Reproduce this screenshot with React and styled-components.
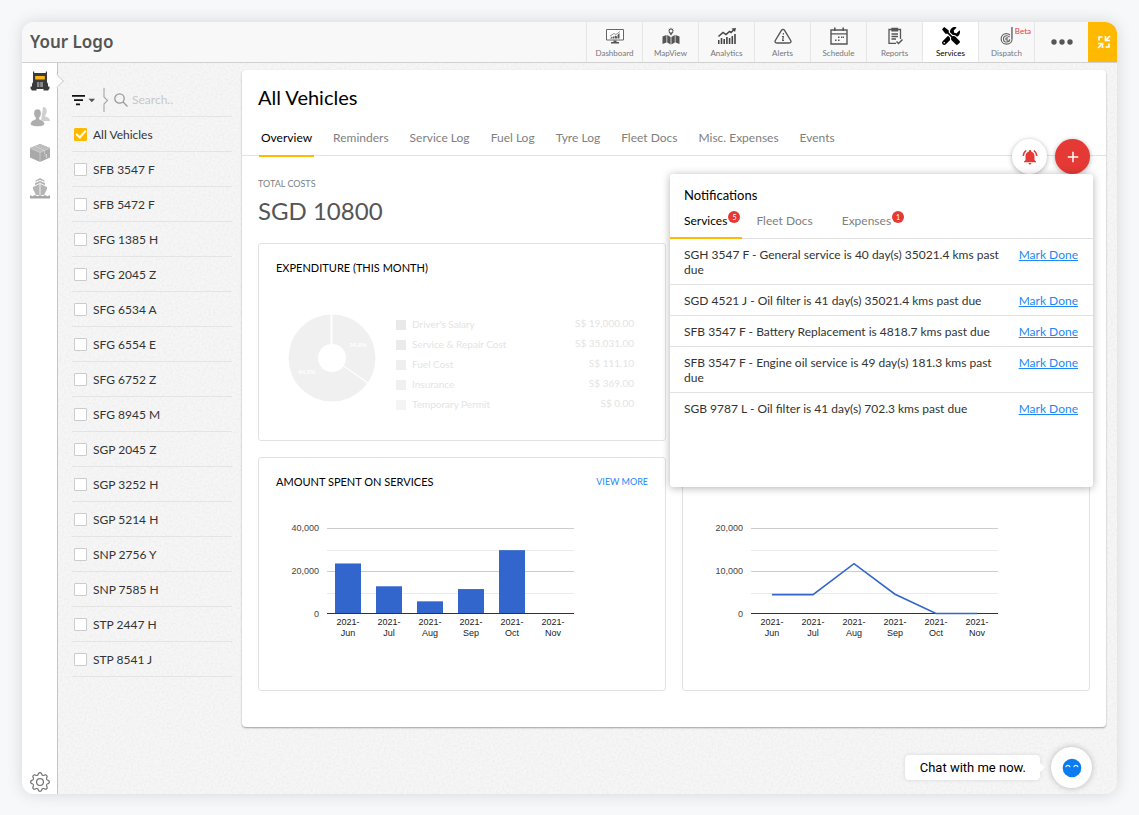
import React, { useState } from "react";
import styled, { createGlobalStyle, css } from "styled-components";
import { BsGear } from "react-icons/bs";
import { FaTools } from "react-icons/fa";
import { MdAdd, MdNotificationsActive } from "react-icons/md";

const NAV_ITEMS = [
  { label: "Dashboard", icon: DashboardIcon },
  { label: "MapView", icon: MapIcon },
  { label: "Analytics", icon: AnalyticsIcon },
  { label: "Alerts", icon: AlertIcon },
  { label: "Schedule", icon: ScheduleIcon },
  { label: "Reports", icon: ReportsIcon },
  { label: "Services", icon: FaTools },
  { label: "Dispatch", icon: DispatchIcon, flag: "Beta" },
];

const RAIL_ITEMS = [
  { label: "Vehicles", icon: TruckIcon },
  { label: "Drivers", icon: PeopleIcon },
  { label: "Assets", icon: BoxIcon },
  { label: "Vessels", icon: ShipIcon },
];

const VEHICLES = [
  "All Vehicles",
  "SFB 3547 F",
  "SFB 5472 F",
  "SFG 1385 H",
  "SFG 2045 Z",
  "SFG 6534 A",
  "SFG 6554 E",
  "SFG 6752 Z",
  "SFG 8945 M",
  "SGP 2045 Z",
  "SGP 3252 H",
  "SGP 5214 H",
  "SNP 2756 Y",
  "SNP 7585 H",
  "STP 2447 H",
  "STP 8541 J",
];

const TABS = [
  "Overview",
  "Reminders",
  "Service Log",
  "Fuel Log",
  "Tyre Log",
  "Fleet Docs",
  "Misc. Expenses",
  "Events",
];

const EXPENSES = [
  { name: "Driver's Salary", value: "S$ 19,000.00", color: "#e9e9e9" },
  { name: "Service & Repair Cost", value: "S$ 35,031.00", color: "#ebebeb" },
  { name: "Fuel Cost", value: "S$ 111.10", color: "#efefef" },
  { name: "Insurance", value: "S$ 369.00", color: "#f0f0f0" },
  { name: "Temporary Permit", value: "S$ 0.00", color: "#f4f4f4" },
];

const NOTICE_TABS = [
  { label: "Services", count: 5 },
  { label: "Fleet Docs" },
  { label: "Expenses", count: 1 },
];

const NOTICES = [
  "SGH 3547 F - General service is 40 day(s) 35021.4 kms past due",
  "SGD 4521 J - Oil filter is 41 day(s) 35021.4 kms past due",
  "SFB 3547 F - Battery Replacement is 4818.7 kms past due",
  "SFB 3547 F - Engine oil service is 49 day(s) 181.3 kms past due",
  "SGB 9787 L - Oil filter is 41 day(s) 702.3 kms past due",
];

const MONTHS = ["Jun", "Jul", "Aug", "Sep", "Oct", "Nov"];
const SERVICE_SPEND = [23500, 12900, 5900, 11600, 29700, 0];
const FUEL_SPEND = [4500, 4500, 11700, 4600, 100, 100];

const App = () => {
  const [selected, setSelected] = useState(["All Vehicles"]);
  const [tab, setTab] = useState("Overview");
  const [noticeTab, setNoticeTab] = useState("Services");

  const toggle = (name) =>
    setSelected((list) =>
      list.includes(name) ? list.filter((n) => n !== name) : [...list, name]
    );

  return (
    <Page>
      <GlobalStyle />
      <Frame>
        <Header>
          <Logo>Your Logo</Logo>
          <Nav>
            {NAV_ITEMS.map(({ label, icon: Icon, flag }) => (
              <NavButton key={label} $active={label === "Services"}>
                <Icon />
                {label}
                {flag && <Flag>{flag}</Flag>}
              </NavButton>
            ))}
            <MoreButton aria-label="More">
              <DotsIcon />
            </MoreButton>
            <CollapseButton aria-label="Exit full screen">
              <CollapseIcon />
            </CollapseButton>
          </Nav>
        </Header>
        <Body>
          <Rail>
            {RAIL_ITEMS.map(({ label, icon: Icon }, i) => (
              <RailButton key={label} aria-label={label} $active={i === 0}>
                <Icon />
              </RailButton>
            ))}
            <SettingsButton aria-label="Settings">
              <BsGear size={20} />
            </SettingsButton>
          </Rail>
          <Workspace>
            <Texture aria-hidden="true">
              <filter id="paper">
                <feTurbulence
                  type="fractalNoise"
                  baseFrequency="0.45"
                  numOctaves="2"
                />
                <feColorMatrix values="0 0 0 0 0.4  0 0 0 0 0.4  0 0 0 0 0.4  0.2 0 0 0 -0.07" />
              </filter>
              <rect width="100%" height="100%" filter="url(#paper)" />
            </Texture>
            <Sidebar>
              <SearchBar>
                <FilterButton aria-label="Filter">
                  <FilterIcon />
                </FilterButton>
                <DividerIcon />
                <SearchLabel>
                  <SearchIcon />
                  <SearchInput placeholder="Search.." aria-label="Search" />
                </SearchLabel>
              </SearchBar>
              <VehicleList>
                {VEHICLES.map((name) => (
                  <li key={name}>
                    <VehicleLabel>
                      <Checkbox
                        type="checkbox"
                        checked={selected.includes(name)}
                        onChange={() => toggle(name)}
                      />
                      {name}
                    </VehicleLabel>
                  </li>
                ))}
              </VehicleList>
            </Sidebar>
            <Main>
              <Sheet>
                <Title>All Vehicles</Title>
                <Tabs>
                  {TABS.map((name) => (
                    <Tab
                      key={name}
                      $active={name === tab}
                      onClick={() => setTab(name)}
                    >
                      {name}
                    </Tab>
                  ))}
                </Tabs>
                <Content>
                  <TotalLabel>TOTAL COSTS</TotalLabel>
                  <Total>SGD 10800</Total>
                  <Cards>
                    <Card>
                      <CardHeader>
                        <h2>EXPENDITURE (THIS MONTH)</h2>
                      </CardHeader>
                      <Expenditure>
                        <Pie />
                        <Legend>
                          <tbody>
                            {EXPENSES.map((e) => (
                              <tr key={e.name}>
                                <th scope="row">
                                  <Swatch $color={e.color} />
                                  {e.name}
                                </th>
                                <td>{e.value}</td>
                              </tr>
                            ))}
                          </tbody>
                        </Legend>
                      </Expenditure>
                    </Card>
                    <Card />
                    <Card>
                      <CardHeader>
                        <h2>AMOUNT SPENT ON SERVICES</h2>
                        <a href="#services">VIEW MORE</a>
                      </CardHeader>
                      <Chart max={40000} values={SERVICE_SPEND} />
                    </Card>
                    <Card>
                      <CardHeader />
                      <Chart max={20000} values={FUEL_SPEND} line />
                    </Card>
                  </Cards>
                </Content>
                <Actions>
                  <RoundButton aria-label="Notifications">
                    <MdNotificationsActive size={18} />
                  </RoundButton>
                  <RoundButton aria-label="Add" $filled>
                    <MdAdd size={18} />
                  </RoundButton>
                </Actions>
                <Popover>
                  <PopoverTitle>Notifications</PopoverTitle>
                  <NoticeTabs>
                    {NOTICE_TABS.map(({ label, count }) => (
                      <NoticeTab
                        key={label}
                        $active={label === noticeTab}
                        onClick={() => setNoticeTab(label)}
                      >
                        {label}
                        {count && <Badge>{count}</Badge>}
                      </NoticeTab>
                    ))}
                  </NoticeTabs>
                  <Notices>
                    {NOTICES.map((text) => (
                      <Notice key={text}>
                        <p>{text}</p>
                        <a href="#done">Mark Done</a>
                      </Notice>
                    ))}
                  </Notices>
                </Popover>
              </Sheet>
              <Chat>
                <ChatBubble>Chat with me now.</ChatBubble>
                <ChatButton aria-label="Open chat">
                  <FaceIcon />
                </ChatButton>
              </Chat>
            </Main>
          </Workspace>
        </Body>
      </Frame>
    </Page>
  );
};

export default App;

// charts

function Chart({ max, values, line }) {
  const y = (v) => 94 - (v / max) * 86;
  const x = (i) => 72 + i * 41;
  const ticks = [max, max / 2, 0];

  return (
    <ChartSvg viewBox="0 0 300 122" width="300" height="122">
      {[0.25, 0.75].map((f) => (
        <rect key={f} x="51" y={Math.round(y(max * f))} width="247" height="1" fill="#ebebeb" />
      ))}
      {ticks.map((t) => (
        <g key={t}>
          {t > 0 && <rect x="51" y={y(t)} width="247" height="1" fill="#ccc" />}
          <text x="43" y={y(t) + 3} textAnchor="end" fill="#444">
            {t.toLocaleString("en-US")}
          </text>
        </g>
      ))}
      {!line &&
        values.map((v, i) => (
          <rect key={i} x={x(i) - 13} y={y(v)} width="26" height={94 - y(v)} fill="#3366cc" />
        ))}
      <rect x="51" y="93" width="247" height="1" fill="#333" />
      {line && (
        <polyline
          points={values.map((v, i) => `${x(i)},${y(v)}`).join(" ")}
          fill="none"
          stroke="#3366cc"
          strokeWidth="1.6"
        />
      )}
      {MONTHS.map((m, i) => (
        <text key={m} textAnchor="middle" fill="#222">
          <tspan x={x(i)} y="105">2021-</tspan>
          <tspan x={x(i)} y="116">{m}</tspan>
        </text>
      ))}
    </ChartSvg>
  );
}

function Pie() {
  return (
    <svg width="88" height="88" viewBox="-44 -44 88 88">
      <circle r="43.5" fill="#f0f0f0" />
      <g stroke="#fff">
        <path d="M-.5 0V-44" strokeWidth="2" />
        <path d="M0 0L36 25" strokeWidth="1.2" />
      </g>
      <circle r="14" fill="#fff" />
      <g fill="#fff" fontFamily="Liberation Sans, sans-serif" fontSize="6" fontWeight="700" textAnchor="middle">
        <text x="26" y="-11">34.8%</text>
        <text x="-25" y="16">64.2%</text>
      </g>
    </svg>
  );
}

// icons

function DashboardIcon() {
  return (
    <svg width="18" height="18" viewBox="0 0 18 18" fill="#555">
      <path d="M.5 2.5h17v10.500H.5z" fill="#fff" stroke="#666" />
      <path d="M4 11.500l2-2v2zM6.500 11.500V10l2-1v2.500zM9 11.500V8.500l2 1v2zM11.500 11.500V8l2-2v5.500z" />
      <path d="M4 9l4-2.500 2 1L14 4.500" fill="none" stroke="#777" strokeWidth=".8" />
      <path d="M7.500 13.500h3v1.500H13v1.500H5V15h2.500z" />
    </svg>
  );
}

function MapIcon() {
  return (
    <svg width="18" height="18" viewBox="0 0 18 18" fill="#555">
      <path d="M.5 9.500L4.500 8v7.500L.5 17zM5.200 8l3.400 2v7.500l-3.400-2zM9.400 10l3.400-2v7.500l-3.400 2zM13.500 8l4 1.500V17l-4-1.500z" />
      <path d="M9 .8a3 3 0 0 1 3 3c0 2-3 5.200-3 5.200S6 5.800 6 3.800a3 3 0 0 1 3-3z" stroke="#f8f8f8" />
      <circle cx="9" cy="4" r="1.500" fill="#f8f8f8" />
    </svg>
  );
}

function AnalyticsIcon() {
  return (
    <svg width="18" height="18" viewBox="0 0 18 18" fill="#444">
      <path d="M0 13h1.500v4H0zM2.700 11h1.600v6H2.700zM5.400 12H7v5H5.400zM8.100 10h1.600v7H8.100zM10.800 11h1.600v6h-1.600zM13.500 9h1.600v8h-1.600zM16.200 7h1.600v10h-1.600z" />
      <path d="M.5 9.500L5 5.500l3 2 3.500-3 1.500 1 3-3" fill="none" stroke="#444" strokeWidth="1.500" />
      <path d="M13.500 1.500l4.500-.5-1 4z" />
    </svg>
  );
}

function AlertIcon() {
  return (
    <svg width="18" height="18" viewBox="0 0 18 18" fill="none" stroke="#555" strokeWidth="1.400">
      <path d="M7.600 3.200L1.300 13.500c-.7 1.300 0 2.500 1.400 2.500h12.600c1.400 0 2.100-1.200 1.400-2.500L10.400 3.200c-.7-1.100-2.100-1.100-2.800 0z" />
      <path d="M9.400 6v1.500M8 9.500h1.300l-.6 4H10" strokeWidth="1.200" />
    </svg>
  );
}

function ScheduleIcon() {
  return (
    <svg width="18" height="18" viewBox="0 0 18 18" fill="#555">
      <path d="M1 3h16v14H1z" fill="none" stroke="#555" strokeWidth="1.400" />
      <path d="M1 6.200h16v1.300H1zM4 .5h1.600v3.500H4zM12.400.5H14v3.500h-1.600z" />
      <path d="M8 9.500h1.500V11H8zM11 9.500h1.500V11H11zM5 12.500h1.500V14H5zM8 12.500h1.500V14H8zM13 9.500h1V11h-1z" />
    </svg>
  );
}

function ReportsIcon() {
  return (
    <svg width="18" height="18" viewBox="0 0 18 18" fill="none" stroke="#555" strokeWidth="1.300">
      <path d="M10 16.300H3V2.500h11.500V12" />
      <path d="M6 1.500h5.500v2.300H6z" fill="#555" />
      <path d="M5.500 7H12M5.500 9.500H12M5.500 12H10" />
      <path d="M10.500 14.500l2 2 4-4" strokeWidth="1.500" />
    </svg>
  );
}

function DispatchIcon() {
  return (
    <svg width="18" height="20" viewBox="0 0 18 20" fill="none" stroke="#666" strokeWidth="1.300">
      <path d="M14.500 0v14" strokeWidth="1.600" />
      <path d="M14.500 14c0 2.500-2 5-6 5-3.700 0-6-2.600-6-5.800 0-3.300 2.300-5.900 5.800-5.900 1.600 0 3 .6 4 1.600" />
      <path d="M12 11.200c-.8-1-2-1.500-3.300-1.500-2.200 0-3.600 1.500-3.600 3.500s1.400 3.500 3.600 3.500c1.800 0 3.300-1.200 3.300-3" />
      <path d="M10.300 12.500c-1-.9-2.600-.4-2.600.8 0 1.100 1.500 1.700 2.600.8" />
    </svg>
  );
}

function DotsIcon() {
  return (
    <svg width="22" height="18" viewBox="0 0 22 18" fill="#555">
      <circle cx="3" cy="9" r="2.700" />
      <circle cx="11" cy="9" r="2.700" />
      <circle cx="19" cy="9" r="2.700" />
    </svg>
  );
}

function CollapseIcon() {
  return (
    <svg width="14" height="14" viewBox="0 0 14 14" fill="none" stroke="#fff" strokeWidth="1.700">
      <path d="M8.500 1v4.500H13M9 5l4-4M5.500 13V8.500H1M5 9l-4 4" />
      <path d="M2 5.500V2h3.500M12 8.500V12H8.500" />
    </svg>
  );
}

function TruckIcon() {
  return (
    <svg width="20" height="20" viewBox="0 0 20 20" fill="#3b3b3d">
      <path d="M3 .5h1.200V2h11.600V.5H17V11l1 2v2.500h1.500v2L18 19.500h-4.500V18h-7v1.500H2L.5 17.500v-2H2V13l1-2z" />
      <path d="M5.200 5h9.600v3.500H5.200z" fill="#fdb813" />
      <path d="M7 11h6v5H7z" fill="#8a8a8c" />
      <path d="M9.700 11v5" stroke="#3b3b3d" strokeWidth=".7" />
    </svg>
  );
}

function PeopleIcon() {
  return (
    <svg width="20" height="20" viewBox="0 0 20 20">
      <path d="M13 0c2.500 0 3.800 1.800 3.800 4 0 2-.8 3.300-1.600 4.200v1.300c1.800.8 4.600 1 4.800 4.500h-9z" fill="#cfcfcf" />
      <path d="M7.500 2c2.500 0 3.700 1.800 3.700 4.200 0 2-.8 3.500-1.700 4.400v1.600c1.900.9 4.800 1.300 5 4.600 0 2-3.200 2.700-7 2.700s-7-.7-7-2.700c.2-3.300 3.100-3.700 5-4.600v-1.600C4.600 9.700 3.800 8.200 3.800 6.200 3.800 3.800 5 2 7.500 2z" fill="#adadad" stroke="#fff" strokeWidth=".6" />
    </svg>
  );
}

function BoxIcon() {
  return (
    <svg width="20" height="20" viewBox="0 0 20 20">
      <path d="M10 1l10 4v9.500L10 19 0 14.500V5z" fill="#a9a9a9" />
      <path d="M10 1l10 4-10 4.500L0 5z" fill="#bdbdbd" />
      <path d="M0 5l10 4.500V19M4.500 3l10 4.500v3.500M10 9.500L20 5" fill="none" stroke="#ddd" strokeWidth=".6" />
      <path d="M14.500 12.500l2-1v3.500" fill="none" stroke="#ddd" strokeWidth=".8" />
    </svg>
  );
}

function ShipIcon() {
  return (
    <svg width="20" height="22" viewBox="0 0 20 22">
      <g fill="#b5b5b5">
        <path d="M10 0l4.500 2.500v1.300L10 2 5.500 3.800V2.500z" />
        <path d="M10 3l5 2v2.200L10 5 5 7.200V5z" />
        <path d="M9.600 6v11H6L3 11V9zM10.400 6v11H14l3-6V9z" />
      </g>
      <path d="M0 17c1.700 1.500 3.300 1.500 5 0 1.700 1.500 3.300 1.500 5 0 1.700 1.500 3.300 1.500 5 0 1.700 1.500 3.300 1.500 5 0v3.500H0z" fill="#a5a5a5" />
    </svg>
  );
}

function FilterIcon() {
  return (
    <svg width="24" height="12" viewBox="0 0 24 12" fill="#111">
      <path d="M0 1h13v1.700H0zM2 5.300h9V7H2zM4 9.600h4v1.700H4z" />
      <path d="M16.500 4.800h6.600l-3.300 3.400z" fill="#555" />
    </svg>
  );
}

function DividerIcon() {
  return (
    <svg width="6" height="24" viewBox="0 0 6 24" fill="none" stroke="#aaa" strokeWidth="1.200">
      <path d="M1 0v9l3.500 3.500L1 16v8" />
    </svg>
  );
}

function SearchIcon() {
  return (
    <svg width="14" height="14" viewBox="0 0 14 14" fill="none" stroke="#999" strokeWidth="1.300">
      <circle cx="5.500" cy="5.500" r="4.700" />
      <path d="M9 9l4.500 4.500" />
    </svg>
  );
}

function FaceIcon() {
  return (
    <svg width="20" height="20" viewBox="0 0 20 20">
      <circle cx="10" cy="10" r="9.300" fill="#0a7cf0" />
      <path d="M4 8.600c.6-1.700 3-1.700 3.800 0M12 8.600c.8-1.700 3.200-1.700 3.800 0" fill="none" stroke="#fff" strokeWidth="1.200" strokeLinecap="round" />
    </svg>
  );
}

// styles

const GlobalStyle = createGlobalStyle`
  * {
    box-sizing: border-box;
  }

  body {
    margin: 0;
    background: #f6f8fa;
    font-family: Lato, "Liberation Sans", sans-serif;
    font-size: 12px;
    color: #333;
  }

  h1, h2, p, ul {
    margin: 0;
    padding: 0;
    font-weight: 400;
  }

  ul {
    list-style: none;
  }

  a {
    color: #1e88f5;
  }

  button {
    padding: 0;
    border: 0;
    background: none;
    font: inherit;
    color: inherit;
    cursor: pointer;
  }
`;

const Page = styled.div`
  min-height: 100vh;
  display: flex;
  padding: 22px 22px 21px;
`;

const Frame = styled.div`
  flex: 1;
  display: flex;
  flex-direction: column;
  border-radius: 12px;
  overflow: hidden;
  background: #f6f6f6;
  box-shadow: 0 0 16px rgba(0, 0, 0, 0.14);
`;

const Header = styled.header`
  display: flex;
  justify-content: space-between;
  align-items: stretch;
  height: 41px;
  background: #f8f8f8;
  border-bottom: 1px solid #d0d0d0;
`;

const Logo = styled.div`
  padding-left: 8px;
  font-family: "Noto Sans", sans-serif;
  font-size: 17px;
  font-weight: 600;
  line-height: 40px;
  color: #555;
`;

const Nav = styled.nav`
  display: flex;
`;

const NavButton = styled.button`
  position: relative;
  display: flex;
  flex-direction: column;
  align-items: center;
  justify-content: center;
  gap: 3px;
  width: 56px;
  border-left: 1px solid #e6e6e6;
  font-size: 8px;
  line-height: 10px;
  color: #777;

  svg {
    width: 18px;
    height: 18px;
  }

  ${(p) =>
    p.$active &&
    css`
      background: #fff;
      color: #000;
    `}
`;

const MoreButton = styled.button`
  display: flex;
  align-items: center;
  justify-content: center;
  width: 54px;
  border-left: 1px solid #e6e6e6;
`;

const Flag = styled.span`
  position: absolute;
  top: 4px;
  right: 3px;
  font-size: 8px;
  line-height: 10px;
  color: #f0353a;
`;

const CollapseButton = styled.button`
  display: flex;
  align-items: center;
  justify-content: center;
  width: 29px;
  padding-left: 2px;
  background: #ffb900;
`;

const Body = styled.div`
  flex: 1;
  display: flex;
`;

const Rail = styled.aside`
  display: flex;
  flex-direction: column;
  align-items: center;
  width: 36px;
  background: #fff;
  border-right: 1px solid #c4c4c4;
`;

const RailButton = styled.button`
  position: relative;
  display: flex;
  align-items: center;
  justify-content: center;
  width: 100%;
  height: 36px;

  ${(p) =>
    p.$active &&
    css`
      &::after {
        content: "";
        position: absolute;
        z-index: 1;
        right: -5px;
        width: 9px;
        height: 9px;
        background: #fff;
        border: solid #d4d4d4;
        border-width: 1px 1px 0 0;
        transform: rotate(45deg);
      }
    `}
`;

const SettingsButton = styled.button`
  display: flex;
  margin-top: auto;
  margin-bottom: 2px;
  color: #777;
`;

const Workspace = styled.div`
  position: relative;
  flex: 1;
  min-width: 0;
  display: flex;
`;

const Texture = styled.svg`
  position: absolute;
  width: 100%;
  height: 100%;
`;

const Sidebar = styled.section`
  position: relative;
  width: 184px;
  padding: 18px 10px 0 14px;
`;

const SearchBar = styled.div`
  display: flex;
  align-items: center;
  height: 36px;
  padding-top: 2px;
  border-bottom: 1px solid #e4e4e4;
`;

const FilterButton = styled.button`
  display: flex;
  margin-right: 7px;
`;

const SearchLabel = styled.label`
  flex: 1;
  display: flex;
  align-items: center;
  gap: 4px;
  margin-left: 5px;
`;

const SearchInput = styled.input`
  width: 100px;
  padding: 0;
  border: 0;
  outline: 0;
  background: none;
  font: inherit;
  color: #333;

  &::placeholder {
    color: #c8c8c8;
  }
`;

const VehicleList = styled.ul`
  li {
    height: 35px;
    border-bottom: 1px solid #e4e4e4;
  }
`;

const VehicleLabel = styled.label`
  display: flex;
  align-items: center;
  gap: 6px;
  height: 34px;
  padding-left: 2px;
`;

const Checkbox = styled.input`
  appearance: none;
  width: 13px;
  height: 13px;
  margin: 0;
  background: #fff;
  border: 1px solid #ccc;
  border-radius: 1px;

  &:checked {
    display: flex;
    align-items: center;
    justify-content: center;
    background: #ffb900;
    border-color: #ffb900;
  }

  &:checked::after {
    content: "";
    width: 4px;
    height: 8px;
    margin-bottom: 2px;
    border: solid #fff;
    border-width: 0 2px 2px 0;
    transform: rotate(42deg);
  }
`;

const Main = styled.main`
  position: relative;
  flex: 1;
  min-width: 0;
  display: flex;
  flex-direction: column;
  padding: 7px 11px 6px 0;
`;

const Sheet = styled.section`
  position: relative;
  background: #fff;
  border-radius: 4px;
  box-shadow: 0 1px 2px rgba(0, 0, 0, 0.35);
`;

const Title = styled.h1`
  padding: 14px 16px 0;
  font-size: 20px;
  line-height: 26px;
  color: #000;
`;

const Tabs = styled.div`
  display: flex;
  gap: 17px;
  padding: 11px 17px 0;
  border-bottom: 1px solid #e2e2e2;
`;

const Tab = styled.button`
  margin-bottom: -2px;
  padding: 0 2px;
  border-bottom: 2px solid transparent;
  font-size: 12px;
  line-height: 34px;
  color: #808080;

  ${(p) =>
    p.$active &&
    css`
      border-color: #ffb900;
      color: #000;
    `}
`;

const Content = styled.div`
  padding: 21px 16px 36px;
`;

const TotalLabel = styled.p`
  font-size: 9px;
  line-height: 14px;
  color: #808080;
`;

const Total = styled.p`
  margin: 5px 0 17px;
  font-size: 24px;
  line-height: 30px;
  color: #555;
`;

const Cards = styled.div`
  display: grid;
  grid-template-columns: 1fr 1fr;
  gap: 16px;
`;

const Card = styled.section`
  padding: 15px 17px;
  border: 1px solid #e2e2e2;
  border-radius: 3px;
`;

const CardHeader = styled.div`
  display: flex;
  align-items: center;
  justify-content: space-between;
  height: 16px;

  h2 {
    font-size: 11px;
    color: #000;
  }

  a {
    font-size: 9px;
    text-decoration: none;
  }
`;

const Expenditure = styled.div`
  display: flex;
  align-items: flex-start;
  gap: 20px;
  padding: 39px 14px 11px 12px;
`;

const Legend = styled.table`
  flex: 1;
  border-collapse: collapse;
  font-size: 10px;
  color: #e4e4e4;

  th,
  td {
    height: 20px;
    padding: 0;
    font-weight: 400;
  }

  th {
    text-align: left;
  }

  td {
    padding-bottom: 2px;
    text-align: right;
  }
`;

const Swatch = styled.span`
  display: inline-block;
  width: 10px;
  height: 10px;
  margin-right: 6px;
  vertical-align: middle;
  background: ${(p) => p.$color};
`;

const ChartSvg = styled.svg`
  display: block;
  margin: 31px 0 33px;
  font-family: "Liberation Sans", sans-serif;
  font-size: 9px;
`;

const Actions = styled.div`
  position: absolute;
  top: 69px;
  right: 16px;
  display: flex;
  gap: 8px;
`;

const RoundButton = styled.button`
  display: flex;
  align-items: center;
  justify-content: center;
  width: 35px;
  height: 35px;
  border-radius: 50%;
  background: ${(p) => (p.$filled ? "#e53935" : "#fff")};
  color: ${(p) => (p.$filled ? "#fff" : "#e53935")};
  box-shadow: 0 1px 5px rgba(0, 0, 0, 0.3);
`;

const Popover = styled.section`
  position: absolute;
  top: 104px;
  right: 13px;
  width: 423px;
  min-height: 313px;
  background: #fff;
  border-radius: 3px;
  box-shadow: 0 1px 8px rgba(0, 0, 0, 0.3);
`;

const PopoverTitle = styled.h2`
  padding: 12px 14px 0;
  font-size: 13px;
  line-height: 18px;
  color: #000;
`;

const NoticeTabs = styled.div`
  display: flex;
  border-bottom: 1px solid #e2e2e2;
`;

const NoticeTab = styled.button`
  position: relative;
  margin-bottom: -1px;
  padding: 0 15px 0 14px;
  border-bottom: 2px solid transparent;
  line-height: 33px;
  color: #808080;

  ${(p) =>
    p.$active &&
    css`
      border-color: #ffb900;
      color: #000;
    `}
`;

const Badge = styled.span`
  position: absolute;
  top: 7px;
  right: 2px;
  width: 12px;
  height: 12px;
  border-radius: 50%;
  background: #e53935;
  font-size: 7px;
  line-height: 12px;
  color: #fff;
`;

const Notices = styled.ul`
  font-size: 12px;
  line-height: 15px;
`;

const Notice = styled.li`
  display: flex;
  justify-content: space-between;
  gap: 16px;
  padding: 8px 15px 7px 14px;
  border-bottom: 1px solid #e2e2e2;

  &:last-child {
    border-bottom: 0;
  }

  p {
    max-width: 320px;
  }

  a {
    white-space: nowrap;
  }
`;

const Chat = styled.div`
  display: flex;
  align-items: center;
  justify-content: flex-end;
  gap: 11px;
  margin-top: auto;
  padding-right: 14px;
`;

const ChatBubble = styled.div`
  position: relative;
  padding: 0 14px 0 15px;
  border-radius: 4px;
  background: #fff;
  font-family: Roboto, sans-serif;
  font-size: 13px;
  line-height: 25px;
  color: #000;
  box-shadow: 0 0 4px rgba(0, 0, 0, 0.12);

  &::after {
    content: "";
    position: absolute;
    top: 9px;
    right: -3px;
    width: 7px;
    height: 7px;
    background: #fff;
    transform: rotate(45deg);
  }
`;

const ChatButton = styled.button`
  display: flex;
  align-items: center;
  justify-content: center;
  width: 41px;
  height: 41px;
  border-radius: 50%;
  background: #fff;
  box-shadow: 0 0 6px rgba(0, 0, 0, 0.25);
`;
